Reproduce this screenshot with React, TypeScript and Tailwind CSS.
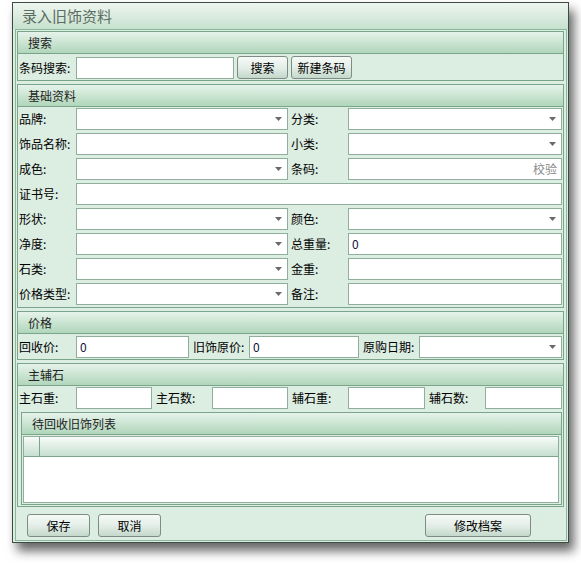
import React from 'react';

function Arrow() {
    return (
        <svg width="7" height="4" viewBox="0 0 7 4" className="mr-[5px] shrink-0">
            <path d="M0 0 H7 L3.5 4 Z" fill="#6a6a6a" />
        </svg>
    );
}

function Field({ className, value, hint, dropdown }: { className: string; value?: string; hint?: string; dropdown?: boolean }) {
    return (
        <div className={`h-[22px] border border-[#8fae9c] bg-white flex items-center ${className}`}>
            <span className="flex-1 pl-[3px] text-[12px] text-[#101040]">{value}</span>
            {hint && <span className="pr-[4px] text-[12px] text-[#8a8a8a]">{hint}</span>}
            {dropdown && <Arrow />}
        </div>
    );
}

function Label({ className, children }: { className: string; children: React.ReactNode }) {
    return <div className={`shrink-0 text-[12px] text-black leading-none ${className}`}>{children}</div>;
}

function GroupHeader({ title }: { title: string }) {
    return (
        <div className="h-[22px] border-b border-[#7ba58a] bg-gradient-to-b from-[#e6f3ea] to-[#b0d6bb] flex items-center pl-[10px] text-[12px] text-[#222]">
            {title}
        </div>
    );
}

function Btn({ className, children }: { className: string; children: React.ReactNode }) {
    return (
        <button className={`h-[23px] rounded-[3px] border border-[#7d8c84] bg-gradient-to-b from-[#f6faf7] via-[#e4eee8] to-[#c4d8cb] text-[12px] text-black flex items-center justify-center ${className}`}>
            {children}
        </button>
    );
}

const basicRows: [string, boolean, string, boolean, string?, string?][] = [
    ['品牌:', true, '分类:', true],
    ['饰品名称:', false, '小类:', true],
    ['成色:', true, '条码:', false, undefined, '校验'],
    ['形状:', true, '颜色:', true],
    ['净度:', true, '总重量:', false, '0'],
    ['石类:', true, '金重:', false],
    ['价格类型:', true, '备注:', false],
];

function BasicRow({ r }: { r: [string, boolean, string, boolean, string?, string?] }) {
    return (
        <div className="flex items-center">
            <Label className="w-[57px]">{r[0]}</Label>
            <Field className="w-[212px]" dropdown={r[1]} />
            <Label className="w-[60px] pl-[3px]">{r[2]}</Label>
            <Field className="flex-1" dropdown={r[3]} value={r[4]} hint={r[5]} />
        </div>
    );
}

export default function App() {
    return (
        <div className="pl-[12px] pt-[2px] pb-[20px] font-['Noto_Sans_CJK_SC',sans-serif]">
            <div className="w-[557px] h-[541px] border border-[#3c4c42] bg-[#dcede2] flex flex-col shadow-[5px_8px_10px_rgba(0,0,0,0.6)]">
                {/* title */}
                <div className="h-[26px] shrink-0 bg-gradient-to-b from-[#eef6f0] to-[#c6e1ce] flex items-center pl-[9px] text-[15px] text-[#5c6c62]">
                    录入旧饰资料
                </div>

                <div className="flex-1 ml-[2px] mr-[1px] mb-[1px] border border-[#8db59a] pl-[1px] pr-[2px] pt-[1px] flex flex-col gap-[3px]">
                    {/* search */}
                    <div className="border border-[#7ba58a]">
                        <GroupHeader title="搜索" />
                        <div className="flex items-center pt-[2px] pb-[1px] pl-[1px]">
                            <Label className="w-[57px]">条码搜索:</Label>
                            <Field className="w-[158px]" />
                            <Btn className="w-[51px] ml-[3px]">搜索</Btn>
                            <Btn className="w-[61px] ml-[3px]">新建条码</Btn>
                        </div>
                    </div>

                    {/* basic */}
                    <div className="border border-[#7ba58a]">
                        <GroupHeader title="基础资料" />
                        <div className="flex flex-col gap-[3px] pt-[1px] pb-[2px] pl-[1px] pr-[1px]">
                            {basicRows.slice(0, 3).map(r => <BasicRow key={r[0]} r={r} />)}
                            <div className="flex items-center">
                                <Label className="w-[57px]">证书号:</Label>
                                <Field className="flex-1" />
                            </div>
                            {basicRows.slice(3).map(r => <BasicRow key={r[0]} r={r} />)}
                        </div>
                    </div>

                    {/* price */}
                    <div className="border border-[#7ba58a]">
                        <GroupHeader title="价格" />
                        <div className="flex items-center pt-[2px] pb-[1px] pl-[1px] pr-[1px]">
                            <Label className="w-[57px]">回收价:</Label>
                            <Field className="w-[113px]" value="0" />
                            <Label className="w-[60px] pl-[4px]">旧饰原价:</Label>
                            <Field className="w-[110px]" value="0" />
                            <Label className="w-[60px] pl-[4px]">原购日期:</Label>
                            <Field className="flex-1" dropdown />
                        </div>
                    </div>

                    {/* stones */}
                    <div className="flex-1 border border-[#7ba58a] flex flex-col">
                        <GroupHeader title="主辅石" />
                        <div className="flex items-center pt-[1px] pl-[1px] pr-[1px]">
                            <Label className="w-[57px]">主石重:</Label>
                            <Field className="w-[76px]" />
                            <Label className="w-[60px] pl-[4px]">主石数:</Label>
                            <Field className="w-[76px]" />
                            <Label className="w-[60px] pl-[4px]">辅石重:</Label>
                            <Field className="w-[77px]" />
                            <Label className="w-[60px] pl-[4px]">辅石数:</Label>
                            <Field className="flex-1" />
                        </div>
                        <div className="flex-1 mt-[3px] mb-[1px] ml-[3px] mr-[1px] border border-[#7ba58a] flex flex-col">
                            <GroupHeader title="待回收旧饰列表" />
                            <div className="flex-1 mt-[1px] ml-[1px] mr-[2px] mb-[1px] border border-[#8fae9c] bg-white flex flex-col">
                                <div className="h-[20px] border-b border-[#7ba58a] bg-gradient-to-b from-[#f8fbf9] to-[#c6dfcf] flex">
                                    <div className="w-[16px] border-r border-[#7ba58a]" />
                                    <div className="flex-1" />
                                </div>
                            </div>
                        </div>
                    </div>

                    {/* buttons */}
                    <div className="h-[30px] shrink-0 flex items-start pt-[4px] pl-[10px] pr-[33px]">
                        <Btn className="w-[63px]">保存</Btn>
                        <Btn className="w-[63px] ml-[8px]">取消</Btn>
                        <div className="flex-1" />
                        <Btn className="w-[106px]">修改档案</Btn>
                    </div>
                </div>
            </div>
        </div>
    );
}
